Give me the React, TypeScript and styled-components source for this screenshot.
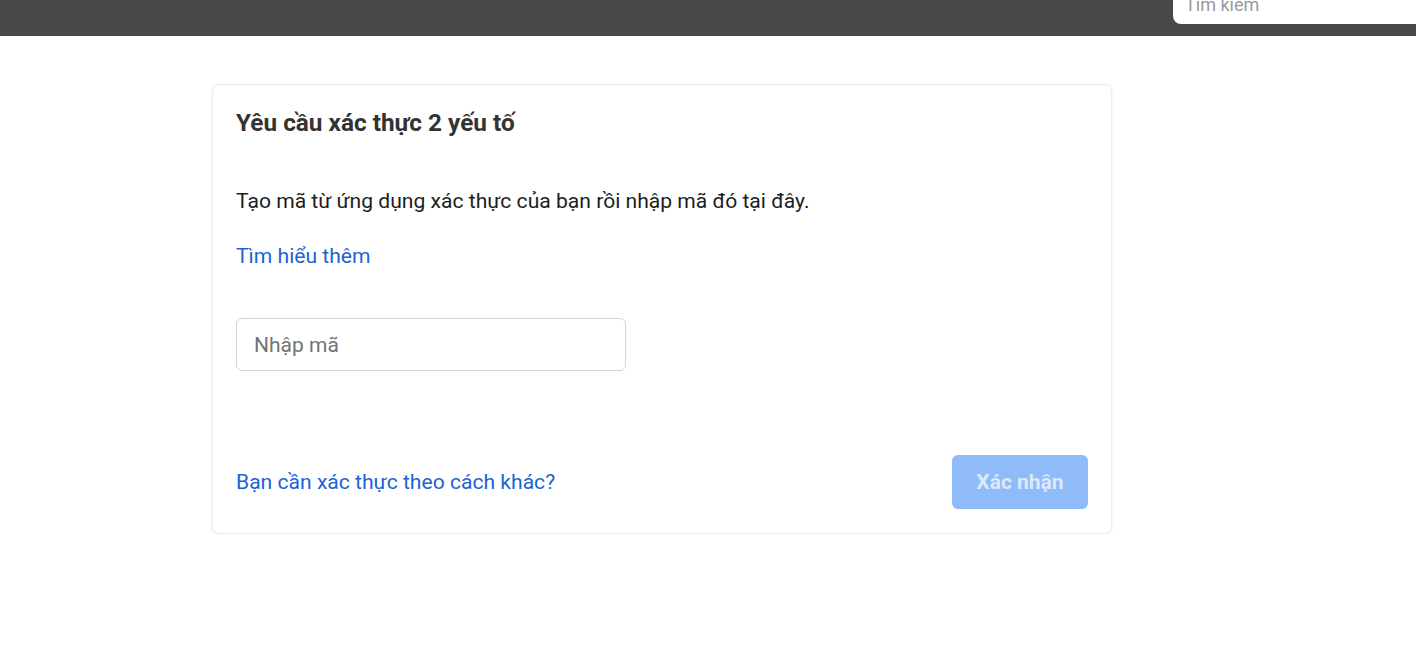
import React from "react";
import styled, { createGlobalStyle } from "styled-components";

const Global = createGlobalStyle`
  html, body { margin: 0; padding: 0; background: #ffffff; }
  body { font-family: Roboto, "Noto Sans", Arial, sans-serif; }
  * { box-sizing: border-box; }
`;

const TopBar = styled.header`
  height: 36px;
  background: #484848;
  display: flex;
  justify-content: flex-end;
  align-items: flex-start;
  overflow: hidden;
`;

const SearchBox = styled.div`
  width: 243px;
  height: 24px;
  background: #ffffff;
  border-bottom-left-radius: 8px;
  display: flex;
  align-items: flex-end;
  padding-left: 12px;
  overflow: hidden;
`;

const SearchText = styled.span`
  font-size: 18px;
  line-height: 18px;
  color: #9a9a9a;
  margin-bottom: 10px;
`;

const Main = styled.main`
  padding: 48px 0 0 212px;
`;

const Card = styled.section`
  width: 900px;
  background: #fff;
  border-radius: 8px;
  border: 1px solid #ededed;
  box-shadow: 0 1px 4px rgba(0, 0, 0, 0.07);
  padding: 24px 23px 24px 23px;
  display: flex;
  flex-direction: column;
`;

const Title = styled.h2`
  margin: 0;
  font-size: 24.35px;
  line-height: 28px;
  font-weight: 700;
  color: #333333;
`;

const Body = styled.p`
  margin: 52px 0 0 0;
  font-size: 21.1px;
  line-height: 24px;
  color: #1c1e21;
`;

const Link = styled.a`
  color: #1b63d5;
  text-decoration: none;
  font-size: 21.1px;
  line-height: 24px;
  cursor: pointer;
`;

const LearnMore = styled(Link)`
  margin-top: 31px;
  align-self: flex-start;
`;

const CodeInput = styled.input`
  margin-top: 50px;
  width: 390px;
  height: 53px;
  border: 1px solid #d5d5d5;
  border-radius: 6px;
  padding: 0 17px;
  font-family: inherit;
  font-size: 21px;
  color: #1c1e21;
  outline: none;
  &::placeholder { color: #737373; }
`;

const Footer = styled.div`
  margin-top: 84px;
  display: flex;
  justify-content: space-between;
  align-items: center;
`;

const Button = styled.button`
  width: 136px;
  height: 54px;
  border: none;
  border-radius: 6px;
  background: #8fbcf8;
  color: #dbe9fc;
  font-family: inherit;
  font-size: 21px;
  font-weight: 700;
  cursor: default;
`;

export default function App() {
  return (
    <>
      <Global />
      <TopBar>
        <SearchBox>
          <SearchText>Tìm kiếm</SearchText>
        </SearchBox>
      </TopBar>
      <Main>
        <Card>
          <Title>Yêu cầu xác thực 2 yếu tố</Title>
          <Body>Tạo mã từ ứng dụng xác thực của bạn rồi nhập mã đó tại đây.</Body>
          <LearnMore>Tìm hiểu thêm</LearnMore>
          <CodeInput placeholder="Nhập mã" />
          <Footer>
            <Link>Bạn cần xác thực theo cách khác?</Link>
            <Button disabled>Xác nhận</Button>
          </Footer>
        </Card>
      </Main>
    </>
  );
}
